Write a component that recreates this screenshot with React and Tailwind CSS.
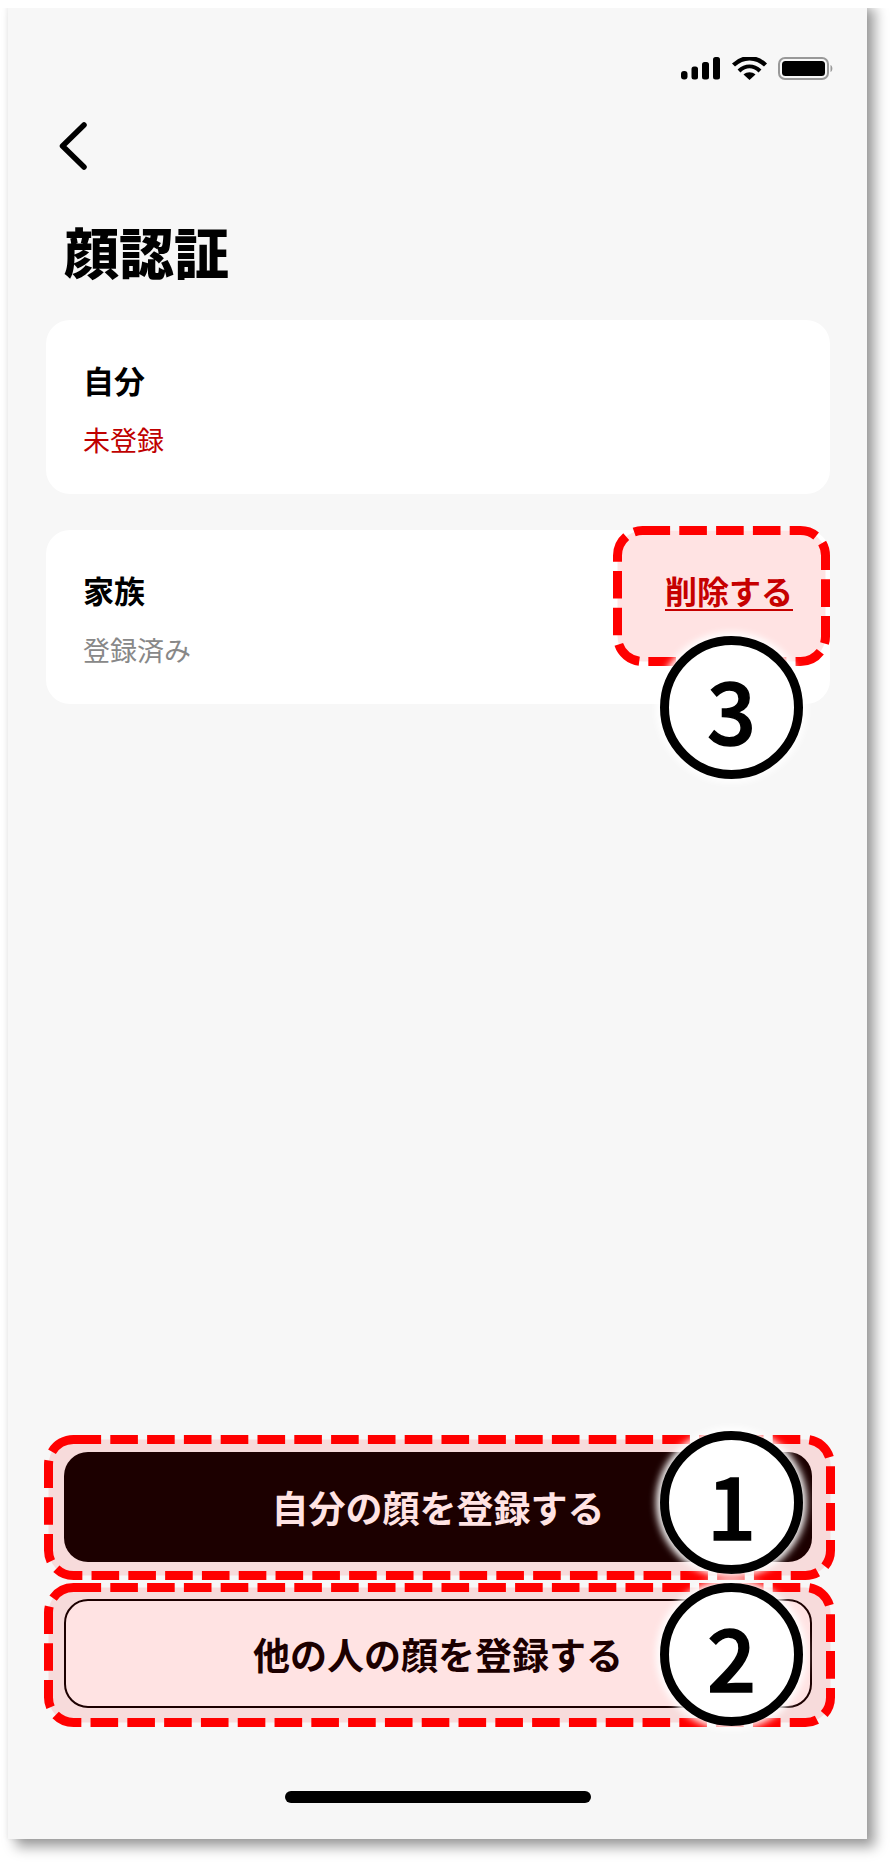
function Dashed({ w, h }) {
  return (
    <svg width={w} height={h} className="block">
      <rect
        x="4.5"
        y="4.5"
        width={w - 9}
        height={h - 9}
        rx="25"
        fill="rgba(255,0,0,0.11)"
        stroke="#ff0000"
        strokeWidth="9"
        strokeDasharray="27.6 9.2"
      />
    </svg>
  );
}

const jp = "font-['Noto_Sans_CJK_JP','Noto_Sans',sans-serif]";

function Marker({ n, className }) {
  return (
    <div
      className={`absolute flex h-[143px] w-[143px] items-center justify-center rounded-full border-[9px] border-black bg-white text-[86px] leading-none font-medium text-black [-webkit-text-stroke:1.5px_#000] shadow-[0_0_7px_4px_rgba(255,255,255,0.95)] ${jp} ${className}`}
    >
      {n}
    </div>
  );
}

function StatusIcons() {
  return (
    <div className="flex items-start justify-end pr-[33px]">
      <svg width="153" height="23" viewBox="0 0 153 23">
        <rect x="0" y="14" width="6.5" height="8.5" rx="3" fill="#000" />
        <rect x="10.5" y="9.5" width="6.5" height="13" rx="2.5" fill="#000" />
        <rect x="21" y="5" width="7" height="17.5" rx="2.5" fill="#000" />
        <rect x="32" y="0" width="7" height="22.5" rx="2.5" fill="#000" />
        <path d="M52.5 8 C62 -1 75 -1 84.5 8" fill="none" stroke="#000" strokeWidth="4.4" />
        <path d="M58 14 C64.5 8 72.5 8 79 14" fill="none" stroke="#000" strokeWidth="4.2" />
        <path d="M62.5 17.5 C66 14.4 71 14.4 74.5 17.5 L68.5 23 Z" fill="#000" />
        <rect x="98" y="1" width="49" height="21" rx="6" fill="none" stroke="#999" strokeWidth="2" />
        <rect x="101" y="4" width="43" height="15" rx="3.5" fill="#000" />
        <path d="M149.5 8 C152 9 152 14 149.5 15 Z" fill="#999" />
      </svg>
    </div>
  );
}

export default function App() {
  return (
    <div className={`relative h-[1868px] w-[896px] overflow-hidden bg-white ${jp}`}>
      <div className="ml-[8px] flex h-[1839px] w-[859px] flex-col bg-[#f7f7f7] pt-[57px] shadow-[8px_8px_12px_rgba(0,0,0,0.38),0_0_6px_rgba(0,0,0,0.08)] [clip-path:inset(8px_-40px_-40px_-10px)]">
        <StatusIcons />
        <div className="mt-[42px] pl-[51px]">
          <svg width="28" height="48" viewBox="0 0 28 48" className="block">
            <path d="M25 3 L3.5 24 L25 45" fill="none" stroke="#000" strokeWidth="5.5" strokeLinecap="round" strokeLinejoin="round" />
          </svg>
        </div>
        <h1 className="mt-[48px] pl-[56px] text-[55px] leading-[64px] font-black text-black">顔認証</h1>
        <div className="mt-[38px] flex flex-col gap-[36px] pr-[37px] pl-[38px]">
          <div className="h-[174px] rounded-[24px] bg-white px-[37px] pt-[40px]">
            <p className="text-[31px] leading-[40px] font-bold text-black">自分</p>
            <p className="mt-[22px] text-[27px] leading-[36px] text-[#bf0000]">未登録</p>
          </div>
          <div className="h-[174px] rounded-[24px] bg-white px-[37px] pt-[40px]">
            <div className="flex items-center justify-between">
              <p className="text-[31px] leading-[40px] font-bold text-black">家族</p>
              <span className="text-[32px] leading-[40px] font-bold text-[#bf0000] underline decoration-2 underline-offset-[5px]">削除する</span>
            </div>
            <p className="mt-[22px] text-[27px] leading-[36px] text-[#888888]">登録済み</p>
          </div>
        </div>
        <div className="mt-auto flex flex-col gap-[37px] pr-[55px] pb-[131px] pl-[56px]">
          <button className="flex h-[110px] items-center justify-center rounded-[24px] bg-black pt-[2px] text-[37px] font-bold text-white">
            自分の顔を登録する
          </button>
          <button className="flex h-[109px] items-center justify-center rounded-[24px] border-2 border-black bg-white pt-[3px] text-[37px] font-bold text-black">
            他の人の顔を登録する
          </button>
        </div>
        <div className="absolute top-[1791px] left-[285px] h-[12px] w-[306px] rounded-full bg-black" />
      </div>

      <div className="absolute top-[1435px] left-[44px]"><Dashed w={791} h={145} /></div>
      <div className="absolute top-[1583px] left-[44px]"><Dashed w={791} h={144} /></div>
      <div className="absolute top-[526px] left-[613px]"><Dashed w={217} h={140} /></div>

      <Marker n="1" className="top-[1431px] left-[660px]" />
      <Marker n="2" className="top-[1583px] left-[660px]" />
      <Marker n="3" className="top-[636px] left-[660px]" />
    </div>
  );
}
